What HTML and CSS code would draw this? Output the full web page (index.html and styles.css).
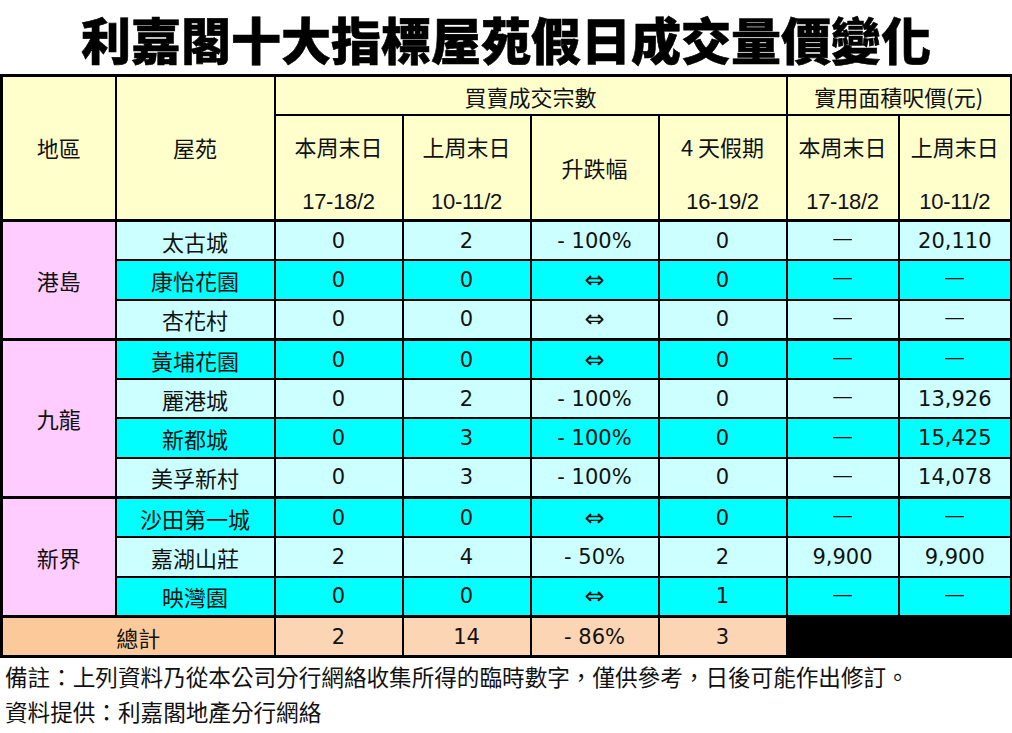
FILE: index.html
```html
<!DOCTYPE html>
<html lang="zh-Hant">
<head>
<meta charset="utf-8">
<title>利嘉閣十大指標屋苑假日成交量價變化</title>
<link rel="stylesheet" href="styles.css">
</head>
<body>
<h1 class="title">利嘉閣十大指標屋苑假日成交量價變化</h1>
<table class="report">
  <colgroup>
    <col class="c-region"><col class="c-estate">
    <col class="c-n"><col class="c-n"><col class="c-n"><col class="c-n">
    <col class="c-p7"><col class="c-p8">
  </colgroup>
  <thead>
    <tr class="hr1">
      <th rowspan="2" class="hd top">地區</th>
      <th rowspan="2" class="hd top">屋苑</th>
      <th colspan="4" class="hd">買賣成交宗數</th>
      <th colspan="2" class="hd">實用面積呎價(元)</th>
    </tr>
    <tr class="hr2">
      <th class="hd two"><span class="l1">本周末日</span><span class="l2">17-18/2</span></th>
      <th class="hd two"><span class="l1">上周末日</span><span class="l2">10-11/2</span></th>
      <th class="hd mid">升跌幅</th>
      <th class="hd two"><span class="l1">4 天假期</span><span class="l2">16-19/2</span></th>
      <th class="hd two"><span class="l1">本周末日</span><span class="l2">17-18/2</span></th>
      <th class="hd two"><span class="l1">上周末日</span><span class="l2">10-11/2</span></th>
    </tr>
  </thead>
  <tbody>
    <tr class="row light grp">
      <td rowspan="3" class="region">港島</td>
      <td class="estate">太古城</td><td>0</td><td>2</td><td>- 100%</td><td>0</td><td><span class="dash">—</span></td><td>20,110</td>
    </tr>
    <tr class="row cyan">
      <td class="estate">康怡花園</td><td>0</td><td>0</td><td class="arrow">⇔</td><td>0</td><td><span class="dash">—</span></td><td><span class="dash">—</span></td>
    </tr>
    <tr class="row light">
      <td class="estate">杏花村</td><td>0</td><td>0</td><td class="arrow">⇔</td><td>0</td><td><span class="dash">—</span></td><td><span class="dash">—</span></td>
    </tr>
    <tr class="row cyan grp">
      <td rowspan="4" class="region">九龍</td>
      <td class="estate">黃埔花園</td><td>0</td><td>0</td><td class="arrow">⇔</td><td>0</td><td><span class="dash">—</span></td><td><span class="dash">—</span></td>
    </tr>
    <tr class="row light">
      <td class="estate">麗港城</td><td>0</td><td>2</td><td>- 100%</td><td>0</td><td><span class="dash">—</span></td><td>13,926</td>
    </tr>
    <tr class="row cyan">
      <td class="estate">新都城</td><td>0</td><td>3</td><td>- 100%</td><td>0</td><td><span class="dash">—</span></td><td>15,425</td>
    </tr>
    <tr class="row light">
      <td class="estate">美孚新村</td><td>0</td><td>3</td><td>- 100%</td><td>0</td><td><span class="dash">—</span></td><td>14,078</td>
    </tr>
    <tr class="row cyan grp">
      <td rowspan="3" class="region">新界</td>
      <td class="estate">沙田第一城</td><td>0</td><td>0</td><td class="arrow">⇔</td><td>0</td><td><span class="dash">—</span></td><td><span class="dash">—</span></td>
    </tr>
    <tr class="row light">
      <td class="estate">嘉湖山莊</td><td>2</td><td>4</td><td>- 50%</td><td>2</td><td>9,900</td><td>9,900</td>
    </tr>
    <tr class="row cyan">
      <td class="estate">映灣園</td><td>0</td><td>0</td><td class="arrow">⇔</td><td>1</td><td><span class="dash">—</span></td><td><span class="dash">—</span></td>
    </tr>
    <tr class="row total grp">
      <td colspan="2" class="total-label">總計</td><td>2</td><td>14</td><td>- 86%</td><td>3</td><td class="blank"></td><td class="blank"></td>
    </tr>
  </tbody>
</table>
<div class="notes">
  <p>備註：上列資料乃從本公司分行網絡收集所得的臨時數字，僅供參考，日後可能作出修訂。</p>
  <p>資料提供：利嘉閣地產分行網絡</p>
</div>
</body>
</html>
```

FILE: styles.css
```css
html, body {
  margin: 0;
  padding: 0;
  background: #ffffff;
}

body {
  width: 1012px;
  font-family: "Noto Sans CJK TC", sans-serif;
  color: #111;
}

.title {
  margin: 0;
  height: 74px;
  line-height: 76px;
  text-align: center;
  font-family: "Noto Sans CJK TC", sans-serif;
  font-weight: 900;
  font-size: 50px;
  color: #000;
  letter-spacing: 0;
  white-space: nowrap;
  -webkit-text-stroke: 0.6px #000;
}

.report {
  border-collapse: collapse;
  table-layout: fixed;
  width: 1010px;
  border: 3px solid #000;
  font-family: "DejaVu Sans", "Noto Sans CJK TC", sans-serif;
  font-size: 21px;
}

.c-region { width: 114px; }
.c-estate { width: 159px; }
.c-n { width: 128px; }
.c-p7 { width: 112px; }
.c-p8 { width: 113px; }

.report th,
.report td {
  border: 2px solid #000;
  padding: 0;
  text-align: center;
  vertical-align: middle;
  color: #111;
}

.hd {
  background: #ffffcc;
  font-weight: normal;
  font-family: "Liberation Sans", "Noto Sans CJK TC", sans-serif;
  font-size: 22px;
}

.hr1 th {
  height: 37px;
  font-family: "Noto Sans CJK TC", sans-serif;
  font-size: 22px;
}

.hr1 th.top {
  font-size: 22px;
  padding-bottom: 3px;
}

.hr2 th {
  height: 103px;
}

.hd.two {
  vertical-align: top;
}

.hd .l1,
.hd .l2 {
  display: block;
  line-height: 30px;
}

.hd .l1 {
  margin-top: 15px;
  font-family: "Noto Sans CJK TC", sans-serif;
  font-size: 22px;
}

.hd .l2 {
  margin-top: 26px;
  letter-spacing: -0.3px;
}

.hd.mid {
  font-family: "Noto Sans CJK TC", sans-serif;
  font-size: 22px;
  vertical-align: top;
  padding-top: 35px;
  height: 68px;
}

.row td {
  height: 37.3px;
  line-height: 24px;
}

.row.grp td {
  border-top-width: 3px;
}

.row.light td { background: #ccffff; }
.row.cyan td { background: #00ffff; }

.row td.region {
  background: #ffccff;
  font-family: "Noto Sans CJK TC", sans-serif;
  font-size: 22px;
}

.estate {
  font-family: "Noto Sans CJK TC", sans-serif;
  font-size: 22px;
}

.arrow {
  font-size: 24px;
  padding-top: 4px;
}

.dash {
  display: inline-block;
  font-family: "Liberation Sans", sans-serif;
  font-size: 17px;
  vertical-align: 5px;
  transform: scaleX(1.1);
}

.row.total td {
  background: #fcd5b4;
}

.row.total td.total-label {
  background: #fcc99b;
  font-family: "Noto Sans CJK TC", sans-serif;
  font-size: 22px;
}

.row.total td.blank {
  background: #000;
}

.notes {
  padding: 1px 0 0 5px;
  font-family: "Noto Sans CJK TC", sans-serif;
  font-size: 22.6px;
  color: #111;
}

.notes p {
  margin: 0;
  line-height: 35px;
}
```
